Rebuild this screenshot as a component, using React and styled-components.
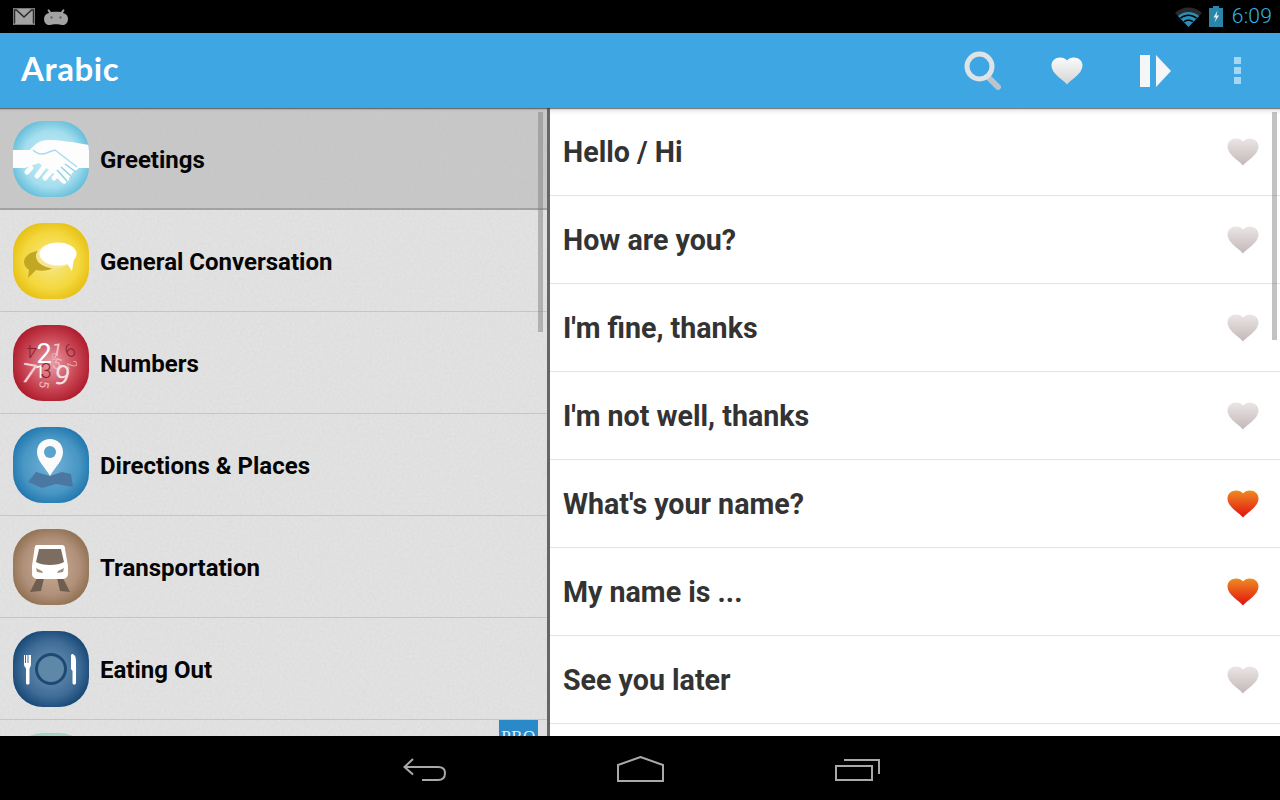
import React, { useId } from 'react';
import styled, { createGlobalStyle } from 'styled-components';

const Global = createGlobalStyle`
  html, body { margin: 0; padding: 0; background: #000; }
  #root { width: 1280px; height: 800px; overflow: hidden; }
  * { box-sizing: border-box; }
`;

const Screen = styled.div`
  width: 1280px; height: 800px; display: flex; flex-direction: column;
  background: #000; font-family: Roboto, "Liberation Sans", sans-serif;
`;
const StatusBar = styled.div`
  height: 33px; flex: none; background: #000; display: flex; align-items: center;
  justify-content: space-between; padding: 0 8px 0 13px;
`;
const StatusGroup = styled.div`display: flex; align-items: center; gap: ${p => p.$gap}px;`;
const Clock = styled.span`
  font-size: 21px; font-weight: 300; color: #33b5e5; line-height: 33px; margin-left: 2px; letter-spacing: .2px;
`;
const ActionBar = styled.header`
  height: 75px; flex: none; background: #3ea6e2; display: flex; align-items: center;
  justify-content: space-between; padding: 0 39px 0 21px; position: relative; z-index: 2;
  box-shadow: 0 1px 1px rgba(40, 40, 40, .55);
`;
const Title = styled.h1`
  margin: 0 0 5px; font-family: Lato, sans-serif; font-weight: 700; font-size: 33px; color: #fff; letter-spacing: .6px;
`;
const Actions = styled.div`display: flex; align-items: center;`;
const ActionSlot = styled.div`display: flex; justify-content: center; margin-left: ${p => p.$ml}px; line-height: 0;`;
const Main = styled.main`flex: 1; min-height: 0; display: flex; overflow: hidden;`;
const LeftPane = styled.section`
  width: 550px; flex: none; background: #e2e2e2; border-right: 3px solid #666; position: relative; overflow: hidden;
`;
const Noise = styled.svg`position: absolute; inset: 0; width: 100%; height: 100%; pointer-events: none; z-index: 1;`;
const CategoryRow = styled.div`
  height: 102px; display: flex; align-items: center; gap: 11px; padding: ${p => p.$selected ? '2px 0 0 13px' : '0 0 0 13px'};
  border-bottom: ${p => p.$selected ? '2px solid #a2a2a2' : '1px solid #c6c6c6'};
  background: ${p => p.$selected ? 'linear-gradient(#bbb 0, #c8c8c8 4px, #c8c8c8 100%)' : 'transparent'};
`;
const CategoryLabel = styled.span`
  font-size: 24px; font-weight: 700; color: #050505; position: relative; z-index: 2; white-space: nowrap; padding-top: 2px;
`;
const Tile = styled.div`
  width: 76px; height: 76px; flex: none; border-radius: 30px; overflow: hidden; position: relative; z-index: 2;
  background: radial-gradient(circle at 50% 50%, ${p => p.$inner} 0, ${p => p.$mid} 52%, ${p => p.$outer} 78%);
  line-height: 0;
`;
const ProBadge = styled.div`
  position: absolute; left: 499px; top: 612px; width: 39px; height: 30px; background: #2a8ac9; z-index: 3;
  color: #e8f2fa; font-family: "Liberation Serif", serif; font-size: 17px; text-align: center; line-height: 30px; letter-spacing: .5px;
  padding-top: 2px;
`;
const Scrollbar = styled.div`
  position: absolute; top: ${p => p.$top}px; left: ${p => p.$left}px; width: 5px; height: ${p => p.$height}px;
  background: rgba(120, 120, 120, .45); z-index: 4;
`;
const RightPane = styled.section`
  flex: 1; background: #fff; position: relative; overflow: hidden;
  &::before { content: ''; position: absolute; top: 0; left: 0; right: 0; height: 7px; background: linear-gradient(#e6e6e6, #fff); }
`;
const PhraseRow = styled.div`
  height: 88px; display: flex; align-items: center; justify-content: space-between; padding: 0 21px 0 13px;
  border-bottom: 1px solid #e2e2e2; position: relative;
`;
const PhraseText = styled.span`font-size: 28.6px; font-weight: 700; color: #333; white-space: nowrap; padding-top: 1px;`;
const NavBar = styled.nav`
  height: 64px; flex: none; background: #000; display: flex; align-items: flex-start; padding-left: 403px;
`;
const NavSlot = styled.div`margin-left: ${p => p.$ml}px; margin-top: ${p => p.$mt}px; line-height: 0;`;

const Heart = ({ top, bottom }) => {
  const id = useId();
  return (
    <svg width="32" height="28" viewBox="0 0 33 28" preserveAspectRatio="none">
      <defs>
        <linearGradient id={id} x1="0" y1="0" x2="0" y2="1">
          <stop offset="0" stopColor={top} />
          <stop offset="1" stopColor={bottom} />
        </linearGradient>
      </defs>
      <path d="M16.500 27.500 C13 23 .5 17 .5 8.500 C.5 3.500 4.500 .5 9.500 .5 C12.500 .5 15 1.500 16.500 3.500 C18 1.500 20.500 .5 23.500 .5 C28.500 .5 32.500 3.500 32.500 8.500 C32.500 17 20 23 16.500 27.500Z" fill={`url(#${id})`} />
    </svg>
  );
};

const Handshake = () => (
  <svg width="76" height="76" viewBox="0 0 76 76">
    <path d="M0 29 H17 C22 23 27 19 35 19 C46 19 60 21 76 24 V47 H66 L58 53 C60 55 58 57 56 56 C57 59 55 61 53 60 C54 63 51 64 48 61 L40 52 C36 48 30 46 26 42 L12 47 H0Z" fill="#fdfdfd" />
    <path d="M20 29 C24 33 30 34 36 31 L42 29 L64 46" fill="none" stroke="#a8dcec" strokeWidth="1.4" />
    <g stroke="#fdfdfd" strokeWidth="5" strokeLinecap="round">
      <path d="M14 51 L18 47" /><path d="M24 55 L31 46" /><path d="M32 57 L38 50" /><path d="M41 57 L44 54" />
    </g>
    <g stroke="#8fd2e6" strokeWidth="1.5"><path d="M48 46 L59 56" /><path d="M44 49 L54 60" /><path d="M52 43 L63 51" /></g>
  </svg>
);
const Chat = () => (
  <svg width="76" height="76" viewBox="0 0 76 76">
    <path d="M11 39 C11 33 18 28 27 28 C37 28 45 34 44 40 C42 47 30 49 23 47 L15 55 L16 47 C13 45 11 42 11 39Z" fill="#c2a724" />
    <ellipse cx="42" cy="33" rx="19" ry="12.500" fill="#f8e58f" />
    <ellipse cx="45" cy="31" rx="18.500" ry="11.500" fill="#fff" />
    <path d="M53 39 L59 48 L61 35Z" fill="#fff" />
  </svg>
);
const NUMS = [
  ['2', 31, 38, 27, 0, '#fff', 400], ['4', 19, 32, 18, 180, '#8c1f2c', 300], ['1', 44, 31, 18, 10, '#f5c6cb', 400], ['6', 57, 32, 18, -25, '#8c1f2c', 300],
  ['7', 16, 58, 27, 10, '#f3cdd2', 400], ['1', 27, 53, 18, 0, '#fff', 400], ['3', 33, 53, 20, 0, '#8c1f2c', 300], ['5', 44, 44, 15, 20, '#f0b8bf', 400],
  ['2', 59, 44, 13, 70, '#f0b8bf', 300], ['9', 49, 60, 28, 15, '#f6dde0', 400], ['5', 31, 64, 13, 100, '#f0b8bf', 400], ['g', 41, 33, 9, 0, '#f0b8bf', 400],
];
const Numbers = () => (
  <svg width="76" height="76" viewBox="0 0 76 76" fontFamily="Roboto, sans-serif">
    {NUMS.map(([t, x, y, s, r, c, w], i) => (
      <text key={i} x={x} y={y} fontSize={s} fontWeight={w} fill={c} textAnchor="middle" transform={`rotate(${r} ${x} ${y - s / 3})`}>{t}</text>
    ))}
  </svg>
);
const Pin = () => (
  <svg width="76" height="76" viewBox="0 0 76 76">
    <path d="M15 55 L23 45 L37 49 L49 45 L58 47 L60 60 L43 57 L29 61Z" fill="#4a78a3" />
    <path d="M37 49 C32 40 24 34 24 25 C24 17 30 12 37 12 C44 12 50 17 50 25 C50 34 42 40 37 49Z" fill="#fbfbfb" />
    <circle cx="37" cy="25" r="6" fill="#5ba2cc" />
  </svg>
);
const Train = () => (
  <svg width="76" height="76" viewBox="0 0 76 76">
    <path d="M24 49 L17 63 L28 62 L31 49Z M44 49 L47 62 L57 63 L50 49Z" fill="#6f5e4e" />
    <path d="M24 16 C22 16 22 17 21.500 20 L19 37 V45 C19 48 22 50 25 50 H49 C52 50 55 48 55 45 V37 L52 20 C52 17 51 16 49 16Z" fill="#fff" />
    <path d="M26 20 H48 L51 33 C45 37 29 37 23 33Z" fill="#7d6d60" />
    <path d="M23 39 L29 42 L30 44 L24 43Z M51 39 L45 42 L44 44 L50 43Z" fill="#a38e7a" />
  </svg>
);
const Plate = () => (
  <svg width="76" height="76" viewBox="0 0 76 76">
    <circle cx="38" cy="38" r="14.500" fill="#5f88a8" stroke="#1d4a75" strokeWidth="3" />
    <path d="M11 24 H12 V32 H13 V24 H14.500 V32 H15.500 V24 H17 V24 H18 V33 C18 36 16.500 36.500 16.500 38 V52 C16.500 54 13 54 13 52 V38 C13 36.500 11 36 11 33Z" fill="#fff" />
    <path d="M59 23 C61 23 63 25 63 30 V52 C63 54 59.500 54 59.500 52 V40 L58 38 V24Z" fill="#fff" />
  </svg>
);

const CATEGORIES = [
  { label: 'Greetings', selected: true, colors: ['#c8ecf5', '#a5deee', '#62bcd9'], Art: Handshake },
  { label: 'General Conversation', colors: ['#f7e88c', '#f4d83e', '#e6bf12'], Art: Chat },
  { label: 'Numbers', colors: ['#e8a0a8', '#c6404f', '#ab1a2a'], Art: Numbers },
  { label: 'Directions & Places', colors: ['#73b3d8', '#4896c4', '#1f76ad'], Art: Pin },
  { label: 'Transportation', colors: ['#c9ae92', '#b0907a', '#8f7050'], Art: Train },
  { label: 'Eating Out', colors: ['#7095b3', '#3f6c97', '#154674'], Art: Plate },
  { label: '', colors: ['#cfe7e0', '#b5dcd2', '#9fd0c4'], Art: null },
];
const PHRASES = [
  ['Hello / Hi', false], ['How are you?', false], ["I'm fine, thanks", false], ["I'm not well, thanks", false],
  ["What's your name?", true], ['My name is ...', true], ['See you later', false], ['', false],
];

export default function App() {
  return (
    <Screen>
      <Global />
      <StatusBar>
        <StatusGroup $gap={9}>
          <svg width="22" height="17" viewBox="0 0 22 17">
            <rect width="22" height="17" fill="#a3a3a3" />
            <path d="M1.500 15.500 V2 H3.500 L11 9 L18.500 2 H20.500 V15.500" fill="none" stroke="#2a2a2a" strokeWidth="1.500" />
            <path d="M.5 .5 H21.500 V16.500 H.5Z" fill="none" stroke="#777" />
          </svg>
          <svg width="24" height="18" viewBox="0 0 24 18">
            <path d="M0 11 C0 7.500 2 6 5 5 L3.500 2 C4 1 4.500 1 5.500 2 L7 4 C10 3.500 14 3.500 17 4 L18.500 2 C19.500 1 20 1 20.500 2 L19 5 C22 6 24 7.500 24 11 C24 15 21 17.500 18 17 C15 16 9 16 6 17 C3 17.500 0 15 0 11Z" fill="#a3a3a3" />
            <circle cx="7.500" cy="9.500" r="1.300" fill="#6a6a6a" />
            <circle cx="16.500" cy="9.500" r="1.300" fill="#6a6a6a" />
          </svg>
        </StatusGroup>
        <StatusGroup $gap={7}>
          <svg width="27" height="20" viewBox="0 0 27 20">
            <path d="M13.500 20 L0 6 C7 -1.500 20 -1.500 27 6Z" fill="#2a2a2a" />
            <path d="M13.500 20 L3 9 C9 3.500 18 3.500 24 9Z" fill="#2a8fb8" />
            <path d="M5 10.500 C10 6.500 17 6.500 22 10.500 L21 11.700 C16 8 11 8 6 11.700Z" fill="#000" />
            <path d="M8.500 14.200 C11.500 11.800 15.500 11.800 18.500 14.200 L17.500 15.300 C15 13.500 12 13.500 9.500 15.300Z" fill="#000" />
          </svg>
          <svg width="14" height="21" viewBox="0 0 14 21">
            <rect x="4" y="0" width="6" height="2" fill="#2a85a8" />
            <rect x="0" y="2" width="14" height="19" fill="#2a85a8" />
            <path d="M8.500 4.500 L4.500 11.500 H7 L5.500 16.500 L10 9.500 H7.500Z" fill="#dff0f6" />
          </svg>
          <Clock>6:09</Clock>
        </StatusGroup>
      </StatusBar>
      <ActionBar>
        <Title>Arabic</Title>
        <Actions>
          <ActionSlot>
            <svg width="38" height="40" viewBox="0 0 38 40">
              <path d="M24 26 L34 36" stroke="#b9c4cb" strokeWidth="6" strokeLinecap="round" />
              <circle cx="15.500" cy="15.500" r="12.500" fill="none" stroke="#dfe3e6" strokeWidth="5" />
            </svg>
          </ActionSlot>
          <ActionSlot $ml={49}>
            <Heart top="#fbfbfb" bottom="#d4d4d4" />
          </ActionSlot>
          <ActionSlot $ml={57}>
            <svg width="31" height="34" viewBox="0 0 31 34">
              <rect x="0" y="1" width="10" height="32" fill="#f4f6f8" />
              <path d="M16 1 L31 17 L16 33Z" fill="#f4f6f8" />
            </svg>
          </ActionSlot>
          <ActionSlot $ml={63}>
            <svg width="7" height="28" viewBox="0 0 7 28" fill="#a6d6f2">
              <rect y="0" width="7" height="7" /><rect y="10" width="7" height="7" /><rect y="20" width="7" height="7" />
            </svg>
          </ActionSlot>
        </Actions>
      </ActionBar>
      <Main>
        <LeftPane>
          <Noise aria-hidden="true">
            <filter id="paper"><feTurbulence type="fractalNoise" baseFrequency="0.4" numOctaves="2" /><feColorMatrix values="0 0 0 0 0.45 0 0 0 0 0.45 0 0 0 0 0.45 0 0 0 0.22 -0.07" /></filter>
            <rect width="100%" height="100%" filter="url(#paper)" />
          </Noise>
          {CATEGORIES.map(({ label, selected, colors, Art }, i) => (
            <CategoryRow key={i} $selected={selected}>
              <Tile $inner={colors[0]} $mid={colors[1]} $outer={colors[2]}>{Art && <Art />}</Tile>
              <CategoryLabel>{label}</CategoryLabel>
            </CategoryRow>
          ))}
          <ProBadge>PRO</ProBadge>
          <Scrollbar $top={4} $left={538} $height={220} />
        </LeftPane>
        <RightPane>
          {PHRASES.map(([text, fav], i) => (
            <PhraseRow key={i}>
              <PhraseText>{text}</PhraseText>
              {text && (fav
                ? <Heart top="#ee8c22" bottom="#e2100e" />
                : <Heart top="#ebe5e5" bottom="#c4b8b8" />)}
            </PhraseRow>
          ))}
          <Scrollbar $top={4} $left={722} $height={228} />
        </RightPane>
      </Main>
      <NavBar>
        <NavSlot $mt={22}>
          <svg width="44" height="24" viewBox="0 0 44 24" fill="none" stroke="#a9a9a9" strokeWidth="2">
            <path d="M10 1 L1.500 9 L10 16.500" /><path d="M2 9 H35 C40 9 42 11.500 42 15 C42 19 40 22 35 22 H19" />
          </svg>
        </NavSlot>
        <NavSlot $ml={170} $mt={20}>
          <svg width="47" height="26" viewBox="0 0 47 26" fill="none" stroke="#a9a9a9" strokeWidth="2">
            <path d="M1 25 V9 L23.500 1 L46 9 V25Z" />
          </svg>
        </NavSlot>
        <NavSlot $ml={171} $mt={22}>
          <svg width="45" height="24" viewBox="0 0 45 24" fill="none" stroke="#a9a9a9" strokeWidth="2">
            <rect x="1" y="8" width="36" height="14" /><path d="M9 2 H44 V16" />
          </svg>
        </NavSlot>
      </NavBar>
    </Screen>
  );
}
